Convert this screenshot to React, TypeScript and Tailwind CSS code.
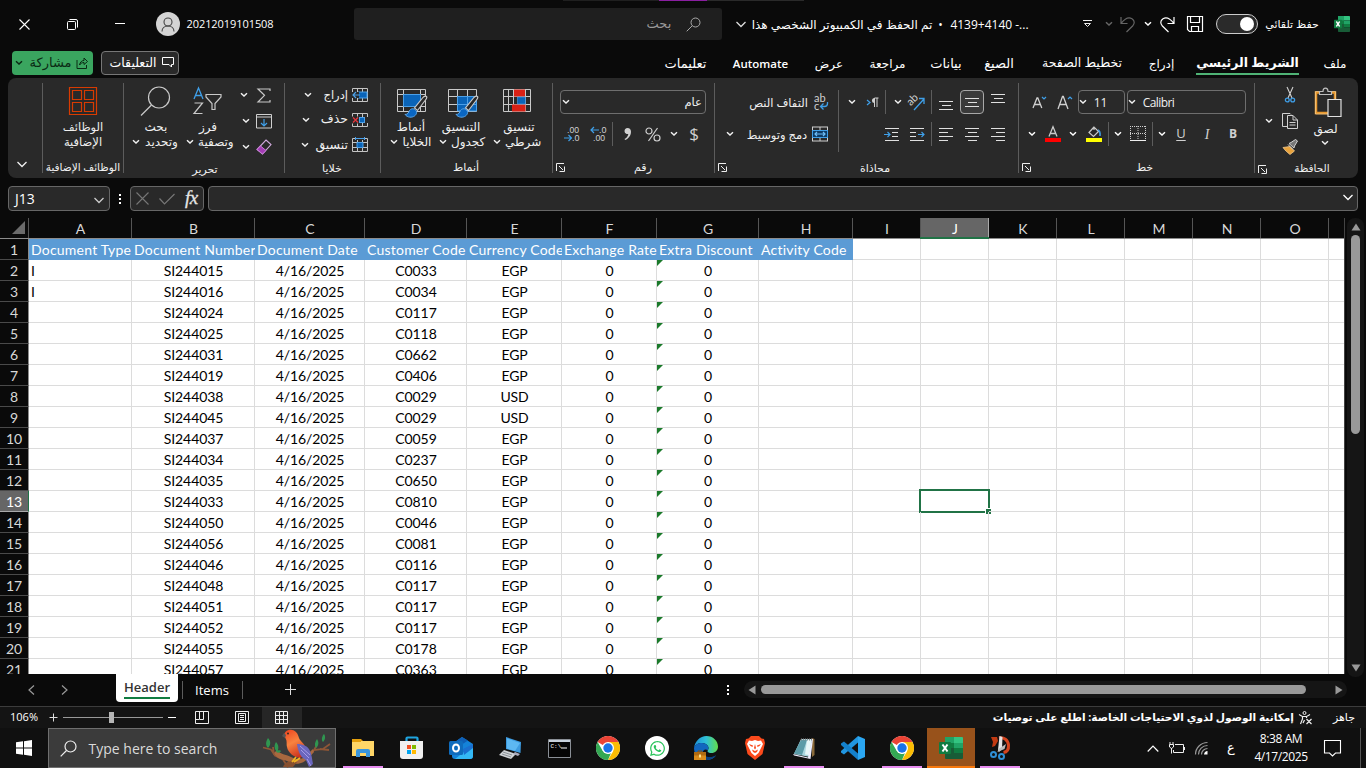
import React from 'react';
import { FaWhatsapp } from 'react-icons/fa';

type P = { className?: string };

const Svg = ({ w, h, className = '', children }: { w: number; h: number; className?: string; children: React.ReactNode }) => (
  <svg width={w} height={h} viewBox={`0 0 ${w} ${h}`} fill="none" className={`block shrink-0 overflow-visible ${className}`}>
    {children}
  </svg>
);

const Chev = ({ className = '' }: P) => (
  <Svg w={8} h={6} className={className}>
    <path d="M1 1.300 4 4l3-2.700" stroke="currentColor" strokeWidth="1.5" />
  </Svg>
);
const BigChev = ({ className = '' }: P) => (
  <Svg w={12} h={7} className={className}>
    <path d="M1.500 1l4.500 4.500L10.500 1" stroke="currentColor" strokeWidth="1.300" />
  </Svg>
);
const Launcher = ({ className = '' }: P) => (
  <Svg w={9} h={9} className={className}>
    <path d="M.5 8V.5H8M3 3l4 4M8.500 3.500v5h-5" stroke="#eee" />
  </Svg>
);
const Sep = ({ className = '' }: P) => <div className={`w-px shrink-0 bg-[#5c5c5c] ${className}`} />;

/* text centred in a box of fixed width, free to spill equally on both sides */
const Txt = ({ className = '', children }: { className?: string; children: React.ReactNode }) => (
  <div className={`flex shrink-0 items-center justify-center whitespace-nowrap ${className}`}>
    <span>{children}</span>
  </div>
);

const ExcelIcon = ({ className = '' }: P) => (
  <svg viewBox="0 0 24 22" preserveAspectRatio="none" className={`block shrink-0 ${className}`}>
    <path d="M6 0h9v11H6z" fill="#21a366" />
    <path d="M15 0h8a1 1 0 0 1 1 1v5h-9z" fill="#33c481" />
    <path d="M6 6h9v5H6z" fill="#107c41" />
    <path d="M15 6h9v5h-9z" fill="#21a366" />
    <path d="M6 11h9v6H6z" fill="#185c37" />
    <path d="M15 11h9v5h-9z" fill="#107c41" />
    <path d="M6 16h18v5a1 1 0 0 1-1 1H7a1 1 0 0 1-1-1z" fill="#185c37" />
    <rect y="5" width="12" height="12" rx="1" fill="#107c41" />
    <path d="M3.500 7.500l5 7M8.500 7.500l-5 7" stroke="#fff" strokeWidth="2" />
  </svg>
);

function TitleBar() {
  return (
    <div className="relative flex h-12 shrink-0 items-center">
      <div className="absolute left-[563px] top-0 h-px w-[97px] bg-[#1f1f1f]" />
      <div className="absolute left-[659px] top-0 h-px w-12 bg-[#8a1fa0]" />
      <div className="absolute left-[707px] top-0 h-px w-[97px] bg-[#2a2a2a]" />
      <Svg w={11} h={11} className="ml-[19px]">
        <path d="M.5.500l10 10M10.500.5l-10 10" stroke="#fff" strokeWidth="1.100" />
      </Svg>
      <Svg w={11} h={11} className="ml-[37px]">
        <rect x=".5" y="2.500" width="8" height="8" rx="1" stroke="#fff" />
        <path d="M2.500.5H9A1.500 1.500 0 0 1 10.500 2v6.500" stroke="#fff" />
      </Svg>
      <div className="-mt-px ml-[37px] h-px w-[10px] bg-white" />
      <div className="ml-[31px] flex size-6 items-center justify-center rounded-full bg-[#d4d4d4]">
        <Svg w={14} h={15}>
          <circle cx="7" cy="5" r="4" stroke="#444" strokeWidth="1.100" />
          <path d="M1 14.500c0-3.500 2.700-5.500 6-5.500s6 2 6 5.500" stroke="#444" strokeWidth="1.100" />
        </Svg>
      </div>
      <Txt className="ml-2 w-[84px] text-[11px] font-medium tracking-[-0.070px] text-white">20212019101508</Txt>
      <div className="ml-[82px] flex h-8 w-[368px] items-center rounded-[3px] bg-[#1f1f1f]">
        <Txt className="ml-[292px] w-[26px] text-[13px] text-[#9a9a9a]">بحث</Txt>
        <Svg w={15} h={15} className="ml-[14px]">
          <circle cx="9.500" cy="5.500" r="4.500" stroke="#aaa" />
          <path d="M6.300 8.700L.7 14.300" stroke="#aaa" />
        </Svg>
      </div>
      <BigChev className="ml-[13px] text-[#ddd]" />
      <div className="ml-[4px] mt-px flex w-[280px] items-center justify-between whitespace-nowrap text-[12px] text-white">
        <Txt className="w-[182px]">
          <span dir="rtl">تم الحفظ في الكمبيوتر الشخصي هذا</span>
        </Txt>
        <span>•</span>
        <Txt className="w-[83px]">4139+4140 -...</Txt>
      </div>
      <Svg w={9} h={8} className="ml-[52px]">
        <path d="M0 .5h9M1.500 3.500h6l-3 3z" stroke="#eee" />
      </Svg>
      <Chev className="ml-[13px] text-[#666]" />
      <Svg w={16} h={17} className="ml-[7px]">
        <path d="M1 1v6.500h6.500M1.300 7.200C4.500 3 8.500.7 12 2.700c3 2 2.700 5 .6 7.300L6.500 16" stroke="#666" strokeWidth="1.200" />
      </Svg>
      <Chev className="ml-2 text-white" />
      <Svg w={16} h={17} className="ml-[7px]">
        <path d="M15 1v6.500H8.500M14.700 7.200C11.500 3 7.500.7 4 2.700 1 4.700 1.300 7.700 3.400 10l6.100 6" stroke="#fff" strokeWidth="1.200" />
      </Svg>
      <Svg w={17} h={17} className="ml-[12px]">
        <path d="M.5.500h15v15h-13l-2-2zM3.500.5v6h9v-6M4.500 15.500v-5h7v5" stroke="#fff" strokeWidth="1.200" />
      </Svg>
      <div className="ml-[12px] flex h-5 w-[42px] items-center justify-end rounded-full border border-[#ccc] bg-[#2a2a2a] pr-[3px]">
        <div className="size-[14px] rounded-full bg-white" />
      </div>
      <Txt className="ml-[7px] w-[54px] text-[11px] text-white">حفظ تلقائي</Txt>
      <ExcelIcon className="ml-[15px] h-4 w-4" />
    </div>
  );
}

function Tabs() {
  return (
    <div className="flex h-[30px] shrink-0 items-center text-[12px] text-white">
      <div className="-mt-px ml-3 flex h-6 w-[81px] items-center rounded bg-[#3aa55f] text-[#0a2a14]">
        <Chev className="ml-[3px]" />
        <Txt className="ml-[6px] mt-px w-[43px] text-[13px]">مشاركة</Txt>
        <Svg w={12} h={12} className="ml-1">
          <path d="M1 3v8.500h9.500V8M3.500 8C4 5 6 3.500 8 3.500V1l3.500 3.500L8 7.500V5.500C6 5.500 4.500 6.500 3.500 8z" stroke="#0a2a14" />
        </Svg>
      </div>
      <div className="-mt-px ml-2 flex h-6 w-[78px] items-center rounded border border-[#777] bg-[#292929]">
        <Txt className="ml-[6px] mt-px w-[50px] text-[12.500px]">التعليقات</Txt>
        <Svg w={12} h={11} className="ml-1">
          <path d="M.5.500h11v7H9.500v2.500L7 7.500H.5z" stroke="#fff" />
        </Svg>
      </div>
      <Txt className="ml-[485px] mt-px w-[43px] text-[13px]">تعليمات</Txt>
      <Txt className="ml-[26px] mt-px w-[55px] text-[11.500px] font-semibold">Automate</Txt>
      <Txt className="ml-[27px] mt-px w-[28px]">عرض</Txt>
      <Txt className="ml-[26px] mt-px w-[37px]">مراجعة</Txt>
      <Txt className="ml-[24px] mt-px w-[32px] text-[13px]">بيانات</Txt>
      <Txt className="ml-[22px] mt-px w-[30px] text-[13px]">الصيغ</Txt>
      <Txt className="ml-[28px] mt-px w-[80px] text-[12.500px]">تخطيط الصفحة</Txt>
      <Txt className="ml-[27px] mt-px w-[25px]">إدراج</Txt>
      <div className="ml-[22px] flex h-[30px] w-[103px] flex-col items-center justify-end pb-[3px]">
        <Txt className="mb-[1px] h-[18px] w-full text-[12.500px] font-bold">الشريط الرئيسي</Txt>
        <div className="h-[2px] w-full bg-[#4fb375]" />
      </div>
      <Txt className="ml-[24px] mt-px w-[24px]">ملف</Txt>
    </div>
  );
}

const Label = ({ className = '', children, launch = true }: { className?: string; children: React.ReactNode; launch?: boolean }) => (
  <div className="mt-auto flex h-[21px] items-center text-[11px]">
    {launch ? <Launcher className="ml-[3px]" /> : null}
    <Txt className={className}>{children}</Txt>
  </div>
);

const Group = ({ className = '', children }: { className?: string; children: React.ReactNode }) => (
  <>
    <Sep className="my-[5px]" />
    <div className={`flex h-full shrink-0 flex-col ${className}`}>{children}</div>
  </>
);

const Two = ({ a, b, className, aw = 'w-full' }: { a: string; b: string; className: string; aw?: string }) => (
  <div className={`flex flex-col text-[12px] ${className}`}>
    <Txt className={`h-[15px] ${aw}`}>{a}</Txt>
    <div className="flex h-[15px] items-center justify-between">
      <Chev className="ml-px" />
      <Txt className="flex-1 pl-1">{b}</Txt>
    </div>
  </div>
);

const Brush = () => (
  <>
    <path d="M29.500 7.500c-1.300-1-3 .2-4 1.500l-8 10 3 2.500 8-10.500c.8-1 1.800-2.600 1-3.500z" fill="#292929" stroke="#c9c9c9" strokeWidth="1.200" />
    <path d="M8 25.500c3 0 3.500-2 4.500-4 1-1.800 4-2.500 6-.5s1 4.500-1 6c-2.500 1.800-7 1.800-9.500-1.500z" fill="#0a66c2" stroke="#5aa5e6" />
  </>
);

function CellsIcon({ kind }: { kind: 0 | 1 | 2 }) {
  return (
    <Svg w={16} h={16}>
      <path d="M.5 1.500h15v13H.5zM5.500 1.500v13M10.500 1.500v13M.5 5.500h15M.5 10.500h15" stroke="#c4c4c4" />
      {kind === 0 && (
        <>
          <path d="M6 5h9v6H6z" fill="#0a64b8" stroke="#4ba0e8" />
          <path d="M0 5h7v6H0z" fill="#292929" />
          <path d="M8 8H1M4 5L1 8l3 3" stroke="#4ba0e8" strokeWidth="1.200" />
        </>
      )}
      {kind === 1 && (
        <>
          <path d="M0 4.500h7v7H0z" fill="#292929" />
          <path d="M13 5h3v6h-3z" fill="#292929" />
          <path d="M7.500 5.500h5v5h-5z" fill="#0a64b8" stroke="#4ba0e8" />
          <path d="M1 5.500l5 5M6 5.500l-5 5" stroke="#e5373d" strokeWidth="1.300" />
        </>
      )}
      {kind === 2 && (
        <>
          <path d="M3 0h10v3H3z" fill="#292929" />
          <path d="M3.500 0v3M12.500 0v3M4 1.500h8" stroke="#4ba0e8" />
          <path d="M5 5.500h6v5H5z" fill="#0a64b8" stroke="#4ba0e8" />
        </>
      )}
    </Svg>
  );
}

const lineSets: Record<string, string> = {
  top: 'M0 .5h14M3 4.500h9M0 8.500h14',
  left: 'M0 .5h14M0 4.500h9M0 8.500h14M0 12.500h9',
  center: 'M0 .5h14M3 4.500h9M0 8.500h14M3 12.500h9',
  right: 'M0 .5h14M5 4.500h9M0 8.500h14M5 12.500h9',
};
const Lines = ({ kind, className = '' }: { kind: string; className?: string }) => (
  <Svg w={14} h={kind === 'top' ? 9 : 13} className={className}>
    <path d={lineSets[kind]} stroke="#e0e0e0" />
  </Svg>
);
const Indent = ({ kind, className = '' }: { kind: 'in' | 'out'; className?: string }) => (
  <Svg w={15} h={13} className={className}>
    <path d={kind === 'in' ? 'M1 .5h14M8 4.500h6M8 8.500h6M1 12.500h14' : 'M0 .5h14M0 4.500h6M0 8.500h6M0 12.500h14'} stroke="#e0e0e0" />
    <path d={kind === 'in' ? 'M0 6.500h6M3.500 4L6 6.500 3.500 9' : 'M8 6.500h6M11.500 4L14 6.500 11.500 9'} stroke="#3f9fe8" strokeWidth="1.200" />
  </Svg>
);

function Ribbon() {
  return (
    <div className="mx-2 flex h-[100px] shrink-0 overflow-hidden rounded-lg bg-[#292929] text-[#f0f0f0]">
      <div className="flex w-[34px] items-end pb-[10px] pl-[8px]">
        <BigChev />
      </div>

      <Group className="w-[80px] items-center">
        <Svg w={28} h={28} className="mt-[9px]">
          <path d="M.5.500h27v27H.5zM3.500 3.500h9v9h-9zM15.500 3.500h9v9h-9zM3.500 15.500h9v9h-9zM15.500 15.500h9v9h-9z" stroke="#d83b01" strokeWidth="1.200" />
        </Svg>
        <Txt className="mt-[4px] h-[15px] text-[11.500px]">الوظائف</Txt>
        <Txt className="h-[15px] text-[11.500px]">الإضافية</Txt>
        <Label launch={false} className="w-[73px] text-[10.500px]">الوظائف الإضافية</Label>
      </Group>

      <Group className="w-[160px]">
        <div className="flex">
          <div className="ml-[7px] flex w-[48px] flex-col">
            <Svg w={30} h={30} className="ml-[9px] mt-[8px]">
              <circle cx="19" cy="11.500" r="10.500" stroke="#c9c9c9" strokeWidth="1.200" />
              <path d="M11.500 19L1 29.500" stroke="#c9c9c9" strokeWidth="1.200" />
            </Svg>
            <Two a="بحث" b="وتحديد" className="mt-[3px] w-[48px]" aw="w-[50px]" />
          </div>
          <div className="ml-[6px] flex w-[46px] flex-col">
            <Svg w={30} h={30} className="ml-[8px] mt-[8px]">
              <path d="M1 13L5.500 2 10 13M2.500 9.500h6" stroke="#3f9fe8" strokeWidth="1.300" />
              <path d="M1.500 17h8L1 27.500h8.500" stroke="#c9c9c9" strokeWidth="1.200" />
              <path d="M13 8.500h15v2.500l-6 6.500v6h-3v-6l-6-6.500z" stroke="#c9c9c9" strokeWidth="1.200" />
            </Svg>
            <Two a="فرز" b="وتصفية" className="mt-[3px] w-[46px]" aw="w-[46px]" />
          </div>
          <div className="ml-[7px] flex flex-col">
            <div className="mt-[4px] flex h-[26px] items-center">
              <Chev className="ml-[2px]" />
              <Svg w={14} h={15} className="ml-[9px]">
                <path d="M13 3V1H1l6.500 6.300L1 14h12v-2" stroke="#c9c9c9" strokeWidth="1.200" />
              </Svg>
            </div>
            <div className="flex h-[26px] items-center">
              <Chev className="ml-[4px]" />
              <Svg w={16} h={15} className="ml-[6px]">
                <path d="M.5.500h15v13.500H.5zM.5 3h15" stroke="#d0d0d0" />
                <path d="M8 5v7M5 9l3 3 3-3" stroke="#3f9fe8" strokeWidth="1.200" />
              </Svg>
            </div>
            <div className="flex h-[26px] items-center">
              <Chev className="ml-[4px]" />
              <Svg w={16} h={16} className="ml-[6px]">
                <path d="M10 1l5 4.500L6.500 15 1 10.500z" stroke="#d0a8dc" strokeWidth="1.100" />
                <path d="M4.500 7L10 11.500 6.500 15 1 10.500z" fill="#a33bb5" stroke="#c77bd5" />
              </Svg>
            </div>
          </div>
        </div>
        <Label launch={false} className="ml-[65px] w-[32px]">تحرير</Label>
      </Group>

      <Group className="w-[95px]">
        {(['إدراج', 'حذف', 'تنسيق'] as const).map((t, i) => (
          <div key={t} className={`flex h-[26px] items-center ${i === 0 ? 'mt-[4px]' : ''}`}>
            <Chev className={i === 0 ? 'ml-[19px]' : i === 1 ? 'ml-[17px]' : 'ml-[16px]'} />
            <div className={`mr-1 flex flex-1 justify-end whitespace-nowrap ${i === 0 ? 'text-[11.500px]' : 'text-[12.500px]'}`}>{t}</div>
            <div className="mr-3">
              <CellsIcon kind={i as 0 | 1 | 2} />
            </div>
          </div>
        ))}
        <Label launch={false} className="ml-[37px] w-[20px]">خلايا</Label>
      </Group>

      <Group className="w-[171px]">
        <div className="flex">
          <div className="ml-[8px] w-[44px]">
            <Svg w={32} h={28} className="ml-[8px] mt-[11px]">
              <path d="M.5.500h28v22H.5zM6.500.5v22M.5 5.500h28M.5 17.500h28M23.500.5v22" stroke="#c9c9c9" />
              <path d="M6.500 5.500h17v12h-17z" fill="#0a64b8" stroke="#4ba0e8" />
              <Brush />
            </Svg>
            <Two a="أنماط" b="الخلايا" className="mt-[2px] w-[43px]" aw="w-[44px]" />
          </div>
          <div className="ml-[5px] w-[47px]">
            <Svg w={32} h={28} className="ml-[10px] mt-[11px]">
              <path d="M.5.500h28v22H.5zM9.500.5v22M19.500.5v22M.5 7.500h28M.5 15.500h28" stroke="#c9c9c9" />
              <path d="M9.500 7.500h19v14.500h-19zM19.500 7.500v15M9.500 15.500h19" fill="#0a64b8" stroke="#4ba0e8" />
              <Brush />
            </Svg>
            <Two a="التنسيق" b="كجدول" className="mt-[2px] w-[46px]" aw="w-[46px]" />
          </div>
          <div className="ml-[7px] w-[50px]">
            <Svg w={29} h={28} className="ml-[11px] mt-[11px]">
              <path d="M.5.500h27v22H.5zM5.500.5v22M10.500.5v22M22.500.5v22M.5 7.500h27M.5 15.500h27" stroke="#c9c9c9" />
              <path d="M11 .5h11v7H11zM9 15.500h13.500v7H9z" fill="#d92015" />
              <path d="M14.500 8h8v7h-8z" fill="#0a64b8" stroke="#4ba0e8" strokeWidth=".6" />
            </Svg>
            <Two a="تنسيق" b="شرطي" className="mt-[2px] w-[49px]" aw="w-[54px]" />
          </div>
        </div>
        <Label launch={false} className="ml-[73px] w-[24px]">أنماط</Label>
      </Group>

      <Group className="w-[161px]">
        <div className="ml-[7px] mt-[12px] flex h-6 w-[146px] items-center rounded border border-[#6e6e6e] pr-[3px] text-[11.500px]">
          <Chev className="ml-px" />
          <div className="flex-1 text-right">عام</div>
        </div>
        <div className="mt-[8px] flex h-6 items-center">
          <Svg w={17} h={16} className="ml-[11px]">
            <text x="3" y="7" fontSize="9" fontFamily="Liberation Sans" fill="#d0d0d0" textLength="12" lengthAdjust="spacingAndGlyphs">.00</text>
            <text x="8" y="15" fontSize="9" fontFamily="Liberation Sans" fill="#d0d0d0">.0</text>
            <path d="M0 12h7M4.500 9L7.500 12l-3 3" stroke="#3f9fe8" strokeWidth="1.200" />
          </Svg>
          <Svg w={17} h={16} className="ml-[9px]">
            <text x="9" y="7" fontSize="9" fontFamily="Liberation Sans" fill="#d0d0d0">.0</text>
            <text x="3" y="15" fontSize="9" fontFamily="Liberation Sans" fill="#d0d0d0" textLength="12" lengthAdjust="spacingAndGlyphs">.00</text>
            <path d="M1 4h8M4 1L1 4l3 3" stroke="#3f9fe8" strokeWidth="1.200" />
          </Svg>
          <Sep className="ml-[5px] h-6" />
          <Svg w={9} h={14} className="ml-[10px]">
            <path d="M4.500 1a3 3 0 1 0 .8 5.900C5 9 3.500 11 1.500 12l.7 1C5.500 11.500 8 8.500 8 4.700 8 2.500 6.700 1 4.500 1z" fill="#d0d0d0" />
          </Svg>
          <Svg w={16} h={15} className="ml-[13px]">
            <circle cx="4" cy="4" r="3" stroke="#d0d0d0" strokeWidth="1.200" />
            <circle cx="12" cy="11" r="3" stroke="#d0d0d0" strokeWidth="1.200" />
            <path d="M12.500 1l-9 13" stroke="#d0d0d0" strokeWidth="1.200" />
          </Svg>
          <Chev className="ml-[9px]" />
          <Txt className="ml-[11px] w-[10px] text-[17px] text-[#d0d0d0]">$</Txt>
        </div>
        <Label className="ml-[69px] w-[18px]">رقم</Label>
      </Group>

      <Group className="w-[303px]">
        <div className="flex h-[83px] pt-[12px]">
          <div className="w-[123px]">
            <div className="flex h-6 items-center">
              <Txt className="ml-[35px] mt-[2px] w-[57px] text-[11.500px]">التفاف النص</Txt>
              <Svg w={15} h={17} className="ml-[7px]">
                <text x="0" y="8" fontSize="11" fontFamily="Lato" fill="#d0d0d0">ab</text>
                <text x="0" y="16" fontSize="11" fontFamily="Lato" fill="#d0d0d0">c</text>
                <path d="M13.500 8v1.500q0 3-3 3H7M9.500 9.500l-3 3 3 3" stroke="#3f9fe8" strokeWidth="1.300" />
              </Svg>
            </div>
            <div className="mt-2 flex h-6 items-center">
              <Chev className="ml-[11px]" />
              <Txt className="ml-[12px] mt-[2px] w-[62px] text-[11.500px]">دمج وتوسيط</Txt>
              <Svg w={16} h={16} className="ml-[4px]">
                <path d="M.5 1v14M15.500 1v14M0 1h16M0 15h16M8 1v3M8 12v3" stroke="#d0d0d0" />
                <path d="M.5 4.500h15v7H.5z" fill="#0d3b66" stroke="#3f9fe8" />
                <path d="M3 8h10M5 6L3 8l2 2M11 6l2 2-2 2" stroke="#6dbcf5" strokeWidth="1.200" />
              </Svg>
            </div>
          </div>
          <Sep className="h-[62px]" />
          <div className="w-[179px]">
            <div className="flex h-6 items-center">
              <Chev className="ml-[9px]" />
              <Svg w={13} h={11} className="ml-[10px]">
                <path d="M1 3l3 2.500L1 8" stroke="#3f9fe8" strokeWidth="1.200" />
                <path d="M8.500 10V1M11 10V1M12.500 1H8.500" stroke="#d0d0d0" />
                <path d="M8.500 1a2.500 2.500 0 0 0 0 5z" fill="#d0d0d0" />
              </Svg>
              <Sep className="ml-[6px] h-6" />
              <Chev className="ml-[8px]" />
              <Svg w={17} h={17} className="ml-[6px]">
                <g transform="rotate(-45 7 8)">
                  <text x="1" y="8" fontSize="11" fontFamily="Lato" fill="#d0d0d0">ab</text>
                </g>
                <path d="M6 16L16 5M11 4.500h5V10" stroke="#3f9fe8" strokeWidth="1.300" />
              </Svg>
              <Sep className="ml-[6px] h-6" />
              <Lines kind="top" className="ml-[7px] mt-[7px]" />
              <div className="ml-[7px] flex size-6 shrink-0 items-center justify-center rounded border border-[#a8a8a8] bg-[#3a3a3a]">
                <Lines kind="top" />
              </div>
              <Lines kind="top" className="-mt-[7px] ml-[7px]" />
            </div>
            <div className="mt-2 flex h-6 items-center">
              <Indent kind="in" className="ml-[45px]" />
              <Indent kind="out" className="ml-[11px]" />
              <Sep className="ml-[6px] h-6" />
              <Lines kind="left" className="ml-[7px]" />
              <Lines kind="center" className="ml-[12px]" />
              <Lines kind="right" className="ml-[12px]" />
            </div>
          </div>
        </div>
        <Label className="ml-[134px] w-[28px]">محاذاة</Label>
      </Group>

      <Group className="w-[235px]">
        <div className="mt-[12px] flex h-6 items-center">
          <Svg w={15} h={14} className="ml-[13px]">
            <path d="M1 13L5 3h.8l4 10M2.500 9.500h6" stroke="#d0d0d0" strokeWidth="1.300" />
            <path d="M10 2l2 2 2-2" stroke="#3f9fe8" strokeWidth="1.200" />
          </Svg>
          <Svg w={16} h={15} className="ml-[10px]">
            <path d="M1 14L5.500 1.500h.8L11 14M2.700 9.500h6.600" stroke="#d0d0d0" strokeWidth="1.300" />
            <path d="M11 4l2-2 2 2" stroke="#3f9fe8" strokeWidth="1.200" />
          </Svg>
          <div className="ml-[5px] flex h-6 w-[47px] items-center rounded border border-[#6e6e6e] text-[12px]">
            <Chev />
            <Txt className="ml-[7px] mt-px w-[13px]">11</Txt>
          </div>
          <div className="ml-[2px] flex h-6 w-[119px] items-center rounded border border-[#6e6e6e] text-[12px]">
            <Chev />
            <Txt className="ml-[7px] mt-px w-[31px] tracking-[-0.600px]">Calibri</Txt>
          </div>
        </div>
        <div className="mt-[8px] flex h-6 items-center text-[#d0d0d0]">
          <Chev className="ml-[9px] text-white" />
          <Svg w={16} h={16} className="ml-[9px]">
            <path d="M4 10.500L8 .8l4 9.700M5.300 7.500h5.400" stroke="#c9c9c9" strokeWidth="1.300" />
            <path d="M0 12h16v4H0z" fill="#f00" />
          </Svg>
          <Chev className="ml-[8px] text-white" />
          <Svg w={16} h={16} className="ml-[9px]">
            <path d="M8 1L3 6.500 7.500 10.500 12.500 5.500zM8 1v3" stroke="#c9c9c9" strokeWidth="1.200" />
            <path d="M12 4q2.500 1 2 6" stroke="#3f9fe8" strokeWidth="1.600" />
            <path d="M0 12h16v4H0z" fill="#ff0" />
          </Svg>
          <Sep className="ml-[6px] h-6" />
          <Chev className="ml-[5px] text-white" />
          <Svg w={16} h={16} className="ml-[8px]">
            <path d="M.5 0v14M15.500 0v14M8 0v14M0 .5h16M0 7.500h16" stroke="#d0d0d0" strokeDasharray="1 1" />
            <path d="M0 14.500h16" stroke="#eee" />
          </Svg>
          <Sep className="ml-[6px] h-6" />
          <Chev className="ml-[5px] text-white" />
          <Txt className="ml-[9px] w-[12px] text-[13px] underline underline-offset-2">U</Txt>
          <Txt className="ml-[14px] w-[12px] font-['Liberation_Serif'] text-[14px] italic">I</Txt>
          <Txt className="ml-[14px] w-[12px] text-[12px] font-bold">B</Txt>
        </div>
        <Label className="ml-[105px] w-[17px]">خط</Label>
      </Group>

      <Group className="w-[103px]">
        <div className="flex">
          <div className="ml-[10px] w-[30px] pt-[4px]">
            <div className="flex h-[26px] items-center">
              <Svg w={10} h={16} className="ml-[20px]">
                <path d="M2 0l5 11M8 0L3 11" stroke="#d0d0d0" strokeWidth="1.100" />
                <circle cx="2.300" cy="13" r="1.900" stroke="#3f9fe8" strokeWidth="1.300" />
                <circle cx="7.700" cy="13" r="1.900" stroke="#3f9fe8" strokeWidth="1.300" />
              </Svg>
            </div>
            <div className="flex h-[26px] items-center">
              <Chev />
              <Svg w={16} h={16} className="ml-[9px]">
                <path d="M5.500 13.500h-5V.5H8l1 1" stroke="#d0d0d0" />
                <path d="M5.500 2.500H11L15.500 7v8.500h-10zM11 2.500V7h4.500M7.500 9.500h6M7.500 12h6" stroke="#d0d0d0" />
              </Svg>
            </div>
            <div className="flex h-[26px] items-center">
              <Svg w={16} h={16} className="ml-[17px]">
                <path d="M1 8.500l7-1 4.500 4.500L8 15.500C5 13 3 11.500 1 8.500z" fill="#e8a33d" stroke="#f3c98b" strokeWidth=".8" />
                <path d="M6 5.500l5 5M7 4.500l2-1 4.500-3L15.500 2 12.500 7l-.5 2z" fill="#777" stroke="#d0d0d0" />
              </Svg>
            </div>
          </div>
          <div className="ml-[19px] flex w-[30px] flex-col">
            <Svg w={28} h={31} className="mt-[9px]">
              <path d="M2 5.500h19V26H2z" stroke="#e8982e" strokeWidth="2.500" />
              <path d="M1.500 4.500h20V27h-20z" stroke="#f4cf94" strokeWidth=".7" />
              <path d="M5.500 7.500v-3h3.500C9 0 14 0 14 4.500h3.500v3z" fill="#292929" stroke="#bdbdbd" strokeWidth="1.200" />
              <path d="M14 12.500h13v17H14z" fill="#292929" stroke="#e0e0e0" strokeWidth="1.200" />
            </Svg>
            <Txt className="mt-[3px] h-[16px] w-[23px] text-[12px]">لصق</Txt>
            <Chev className="ml-[7px] mt-[3px]" />
          </div>
        </div>
        <Label className="ml-[27px] w-[36px] text-[10.500px]">الحافظة</Label>
      </Group>
    </div>
  );
}

function FormulaBar() {
  return (
    <div className="flex h-[40px] shrink-0 px-2 pt-2">
      <div className="flex h-[25px] w-[102px] items-center rounded border border-[#666] bg-[#292929] pl-[6px] text-[14px] text-white">
        <span className="flex-1">J13</span>
        <BigChev className="mr-[4px] mt-[3px] text-[#ccc]" />
      </div>
      <div className="ml-[9px] flex h-[25px] w-[3px] flex-col justify-center gap-[2px]">
        <i className="size-[2px] bg-white" />
        <i className="size-[2px] bg-white" />
        <i className="size-[2px] bg-white" />
      </div>
      <div className="ml-[8px] flex h-[25px] w-[74px] items-center rounded border border-[#666] bg-[#292929]">
        <Svg w={13} h={13} className="ml-[5px]">
          <path d="M.5.500l12 12M12.500.5l-12 12" stroke="#777" strokeWidth="1.100" />
        </Svg>
        <Svg w={16} h={12} className="ml-[10px]">
          <path d="M.5 5.500l5 5.500L15.500 1" stroke="#777" strokeWidth="1.200" />
        </Svg>
        <span className="-mt-[3px] ml-[10px] font-['Liberation_Serif'] text-[19px] italic leading-none tracking-[-0.500px] text-[#e6e6e6] [-webkit-text-stroke:0.3px]">fx</span>
      </div>
      <div className="ml-1 flex h-[25px] flex-1 items-center justify-end rounded border border-[#666] bg-[#292929] pr-[3px]">
        <BigChev className="-mt-[3px] text-white" />
      </div>
    </div>
  );
}

const cols = [
  { n: 'A', w: 'w-[103px]', h: 'Document Type' },
  { n: 'B', w: 'w-[123px]', h: 'Document Number' },
  { n: 'C', w: 'w-[110px]', h: 'Document Date' },
  { n: 'D', w: 'w-[102px]', h: 'Customer Code' },
  { n: 'E', w: 'w-[95px]', h: 'Currency Code' },
  { n: 'F', w: 'w-[95px]', h: 'Exchange Rate' },
  { n: 'G', w: 'w-[102px]', h: 'Extra Discount' },
  { n: 'H', w: 'w-[94px]', h: 'Activity Code' },
  { n: 'I', w: 'w-[68px]' },
  { n: 'J', w: 'w-[68px]' },
  { n: 'K', w: 'w-[68px]' },
  { n: 'L', w: 'w-[68px]' },
  { n: 'M', w: 'w-[68px]' },
  { n: 'N', w: 'w-[68px]' },
  { n: 'O', w: 'w-[68px]' },
  { n: '', w: 'w-[68px]' },
];

const data: [string, string, string][] = [
  ['SI244015', 'C0033', 'EGP'], ['SI244016', 'C0034', 'EGP'], ['SI244024', 'C0117', 'EGP'], ['SI244025', 'C0118', 'EGP'],
  ['SI244031', 'C0662', 'EGP'], ['SI244019', 'C0406', 'EGP'], ['SI244038', 'C0029', 'USD'], ['SI244045', 'C0029', 'USD'],
  ['SI244037', 'C0059', 'EGP'], ['SI244034', 'C0237', 'EGP'], ['SI244035', 'C0650', 'EGP'], ['SI244033', 'C0810', 'EGP'],
  ['SI244050', 'C0046', 'EGP'], ['SI244056', 'C0081', 'EGP'], ['SI244046', 'C0116', 'EGP'], ['SI244048', 'C0117', 'EGP'],
  ['SI244051', 'C0117', 'EGP'], ['SI244052', 'C0117', 'EGP'], ['SI244055', 'C0178', 'EGP'], ['SI244057', 'C0363', 'EGP'],
];

function Sheet() {
  return (
    <div className="flex h-[456px] shrink-0 font-['Lato','DejaVu_Sans',sans-serif] text-[14px]">
      <div className="w-[1345px] shrink-0 overflow-hidden border-r border-[#444]">
        <div className="flex h-[21px] w-[1420px] border-b border-[#8c8c8c] text-[#d8d8d8]">
          <div className="flex w-[29px] shrink-0 items-end justify-end border-r border-[#555] pb-[4px] pr-[3px]">
            <Svg w={13} h={13}>
              <path d="M13 0v13H0z" fill="#6b6b6b" />
            </Svg>
          </div>
          {cols.map((c) => (
            <div
              key={c.n}
              className={`relative flex h-[20px] shrink-0 items-center justify-center border-r pl-px pt-px ${c.w} ${c.n === 'J' ? 'border-[#aaa] bg-[#666] text-white' : 'border-[#555]'}`}
            >
              {c.n}
              {c.n === 'J' && <div className="absolute -bottom-px -left-px h-[2px] w-[69px] bg-[#217346]" />}
            </div>
          ))}
        </div>
        <div className="flex h-[21px] w-[1420px] bg-white">
          <RowNo n={1} />
          {cols.map((c, i) => (
            <div
              key={c.n}
              className={`flex h-[21px] shrink-0 items-center overflow-hidden whitespace-nowrap pl-[2px] tracking-[0.220px] text-white ${c.w} ${i < 8 ? 'bg-[#5b9bd5]' : 'border-b border-r border-[#dcdcdc]'}`}
            >
              {c.h}
            </div>
          ))}
        </div>
        {data.map(([inv, cust, cur], r) => {
          const vals = [r < 2 ? 'I' : '', inv, '4/16/2025', cust, cur, '0', '0'];
          return (
            <div key={inv} className="flex h-[21px] w-[1420px] bg-white text-black">
              <RowNo n={r + 2} />
              {cols.map((c, i) => (
                <div
                  key={c.n}
                  className={`relative flex h-[21px] shrink-0 items-center border-b border-r border-[#dcdcdc] tracking-[-0.100px] ${c.w} ${i === 0 ? 'pl-[2px]' : 'justify-center pl-px'}`}
                >
                  {vals[i]}
                  {i === 6 && (
                    <Svg w={6} h={6} className="absolute left-0 top-0">
                      <path d="M0 0h6L0 6z" fill="#1b7a2b" />
                    </Svg>
                  )}
                  {r === 11 && c.n === 'J' && (
                    <>
                      <div className="absolute -left-[2px] -top-[2px] h-[24px] w-[71px] border-2 border-[#217346]" />
                      <div className="absolute -bottom-[3px] -right-[3px] size-[6px] border-l border-t border-white bg-[#217346]" />
                    </>
                  )}
                </div>
              ))}
            </div>
          );
        })}
      </div>
      <div className="ml-[2px] flex h-[459px] w-[17px] shrink-0 flex-col items-center rounded-lg bg-[#151515]">
        <Svg w={10} h={8} className="mt-[5px]">
          <path d="M5 .5L9.500 7.500H.5z" fill="#999" />
        </Svg>
        <div className="mt-[4px] h-[199px] w-[9px] rounded-full bg-[#999]" />
        <Svg w={10} h={8} className="mb-[5px] mt-auto">
          <path d="M5 7.500L.5.500h9z" fill="#999" />
        </Svg>
      </div>
    </div>
  );
}

const RowNo = ({ n }: { n: number }) => (
  <div
    className={`flex h-[21px] w-[29px] shrink-0 items-center justify-center border-b border-r ${n === 13 ? 'border-b-[#aaa] border-r-[#217346] bg-[#666] text-white' : 'border-b-[#4a4a4a] border-r-[#8c8c8c] bg-[#0a0a0a] text-[#d8d8d8]'}`}
  >
    {n}
  </div>
);

function SheetTabs() {
  return (
    <div className="flex h-8 shrink-0 text-white">
      <Svg w={7} h={10} className="ml-[28px] mt-[11px]">
        <path d="M6 .5L1 5l5 4.500" stroke="#999" strokeWidth="1.200" />
      </Svg>
      <Svg w={7} h={10} className="ml-[26px] mt-[11px]">
        <path d="M1 .5L6 5 1 9.500" stroke="#999" strokeWidth="1.200" />
      </Svg>
      <div className="ml-[48px] flex h-[28px] w-[62px] flex-col items-center rounded-b bg-white">
        <Txt className="h-[23px] pt-[5px] text-[13px] font-semibold text-[#333]">Header</Txt>
        <div className="h-[2px] w-[46px] bg-[#107c41]" />
      </div>
      <Sep className="ml-[4px] mt-[7px] h-[18px]" />
      <Txt className="ml-3 mt-px h-[32px] w-[34px] text-[13px] font-medium">Items</Txt>
      <Sep className="ml-[13px] mt-[7px] h-[18px]" />
      <Svg w={11} h={11} className="ml-[42px] mt-[10px]">
        <path d="M5.500 0v11M0 5.500h11" stroke="#ddd" />
      </Svg>
      <div className="ml-[431px] mt-[11px] flex flex-col gap-[2px]">
        <i className="size-[2px] bg-white" />
        <i className="size-[2px] bg-white" />
        <i className="size-[2px] bg-white" />
      </div>
      <div className="ml-[15px] mt-[7px] flex h-[17px] w-[603px] items-center rounded-full bg-[#151515]">
        <Svg w={8} h={10} className="ml-1">
          <path d="M7.500.5v9L.5 5z" fill="#999" />
        </Svg>
        <div className="ml-[5px] h-[9px] w-[545px] rounded-full bg-[#999]" />
        <Svg w={8} h={10} className="ml-auto mr-[4px]">
          <path d="M.5.500v9L7.500 5z" fill="#999" />
        </Svg>
      </div>
    </div>
  );
}

function StatusBar() {
  return (
    <div className="flex h-[22px] shrink-0 items-center border-t border-[#3c3c3c] bg-[#141414] text-[11px] text-white">
      <Txt className="ml-[10px] w-[28px]">106%</Txt>
      <Svg w={9} h={9} className="ml-[11px]">
        <path d="M4.500.5v8M.5 4.500h8" stroke="#ddd" />
      </Svg>
      <div className="ml-[5px] h-px w-[46px] bg-[#999]" />
      <div className="h-[11px] w-[5px] bg-[#b5b5b5]" />
      <div className="h-px w-[49px] bg-[#999]" />
      <div className="ml-[5px] h-px w-[8px] bg-white" />
      <Svg w={14} h={13} className="ml-[19px]">
        <path d="M.5.500h13v12H.5zM4.500.5v8h4v-8M0 8.500h4" stroke="#eee" />
      </Svg>
      <Svg w={14} h={13} className="ml-[26px]">
        <path d="M.5.500h13v12H.5zM3.500 2.500h7v8h-7zM5 4.500h4M5 6.500h4M5 8.500h4" stroke="#eee" />
      </Svg>
      <div className="ml-[13px] flex h-[21px] w-[40px] items-center justify-center bg-[#262626]">
        <Svg w={13} h={13} className="-ml-px">
          <path d="M.5.500h12v12H.5zM4.500.5v12M8.500.5v12M.5 4.500h12M.5 8.500h12" stroke="#eee" />
        </Svg>
      </div>
      <div dir="rtl" className="ml-[690px] w-[302px] whitespace-nowrap text-right text-[10.600px] font-bold">
        إمكانية الوصول لذوي الاحتياجات الخاصة: اطلع على توصيات
      </div>
      <Svg w={15} h={14} className="ml-[4px]">
        <circle cx="6.500" cy="2" r="1.500" stroke="#eee" />
        <path d="M1 3.500l3.500 2V8L2.500 13M12 3.500l-3.500 2V7M4.500 5.500h4M6.500 9L5 12M8.500 8l5 5M13.500 8l-5 5" stroke="#eee" strokeWidth="1.200" />
      </Svg>
      <Txt className="ml-[19px] w-[24px]">جاهز</Txt>
    </div>
  );
}

const Chrome = () => (
  <svg width="24" height="24" viewBox="0 0 24 24">
    <circle cx="12" cy="12" r="12" fill="#fff" />
    <path d="M12 12L1.600 6A12 12 0 0 1 22.400 6H12z" fill="#ea4335" />
    <path d="M12 6h10.400A12 12 0 0 1 12 24l5.200-9z" fill="#fbbc04" />
    <path d="M1.600 6l5.200 9L12 18l3-1-3 7A12 12 0 0 1 1.600 6z" fill="#34a853" />
    <circle cx="12" cy="12" r="6" fill="#fff" />
    <circle cx="12" cy="12" r="4.700" fill="#1a73e8" />
  </svg>
);

const Bird = () => (
  <Svg w={70} h={38}>
    <defs>
      <linearGradient id="bd" x1="24" y1="2" x2="38" y2="28" gradientUnits="userSpaceOnUse">
        <stop stopColor="#ef4a22" />
        <stop offset=".45" stopColor="#f8833f" />
        <stop offset="1" stopColor="#c92f1d" />
      </linearGradient>
    </defs>
    <path d="M1 18.500l8 2M9 20.500l4 6 8 4 5 8M12 26l-1-8M48 26l4-5 9-1 7-5M58 20l9 1M52 21l3-5" stroke="#8f5636" strokeWidth="1.800" />
    <path d="M12 24c3 7 10 6 15 9 6 3 12 2 16-1 4-3 6-6 9-9l-1-3c-4 3-6 7-10 9-5 2-8 1-12-1-6-3-10-2-14-7z" fill="#a8683f" />
    <path d="M21 38c2-5 6-7 14-5l-4 5z" fill="#87502f" />
    <path d="M6 9c3 3 3 7 0 10-3-3-2-7 0-10zM14 13c3 3 3 7 1 10-3-3-3-7-1-10zM14 23c2-2 4-2 5-1-1 2-3 2-5 1zM55 10c2 3 2 6-1 9-2-3-1-6 1-9zM62 5c2 3 1 6-1 8-2-2-1-6 1-8z" fill="#2f9650" />
    <path d="M22 7c0-4 4-7 8-6 4 .5 6 4 7 8 1 3 6 6 7 11 1 4-2 7-6 9-6-1-12-5-13-11-1-4 1-6-3-11z" fill="url(#bd)" />
    <path d="M35 15c6 0 11 2 13 7 2 4 2 9 3 13l-4 3-3-7c-5-2-8-8-9-16z" fill="#6a66bd" />
    <path d="M38 17l10 9M39 21l8 8M45 30l4 7" stroke="#a59be8" />
    <path d="M22 4l-2 3 3 2 1-3z" fill="#555" />
    <circle cx="26" cy="4.500" r=".9" fill="#222" />
    <path d="M34 28l-4 5M38 29l-6 4" stroke="#f0b422" strokeWidth="1.800" />
  </Svg>
);

const taskIcons: { key: string; bar: string; el: React.ReactNode }[] = [
  {
    key: 'files', bar: 'bg-[#e88df0]', el: (
      <Svg w={22} h={20}>
        <path d="M0 1h9l2 2H0z" fill="#d9920c" /><path d="M0 3h22v15H0z" fill="#ffd667" /><path d="M0 1h9v3H0z" fill="#e5a00d" />
        <path d="M4 19v-6a2 2 0 0 1 2-2h10a2 2 0 0 1 2 2v6h-4v-4H8v4z" fill="#3a96dd" />
      </Svg>
    ),
  },
  {
    key: 'store', bar: '', el: (
      <Svg w={24} h={24}>
        <path d="M6.500 6V2.500a1 1 0 0 1 1-1h9a1 1 0 0 1 1 1V6" stroke="#1fa5e0" strokeWidth="2.200" />
        <path d="M0 5h23v15a3 3 0 0 1-3 3H3a3 3 0 0 1-3-3z" fill="#f0f0f0" />
        <path d="M7 9h4v4H7z" fill="#f25022" /><path d="M12 9h4v4h-4z" fill="#7fba00" /><path d="M7 14h4v4H7z" fill="#00a4ef" /><path d="M12 14h4v4h-4z" fill="#ffb900" />
      </Svg>
    ),
  },
  {
    key: 'outlook', bar: '', el: (
      <Svg w={24} h={22}>
        <path d="M3 7l10-7 11 7v12a3 3 0 0 1-3 3H6a3 3 0 0 1-3-3z" fill="#1482d8" /><path d="M13 0l6 3.500L6 12V5z" fill="#0f5fb5" />
        <path d="M24 8v11a3 3 0 0 1-3 3H6z" fill="#33b8f5" /><path d="M14 12l10-5v4L15 18z" fill="#1a6fcf" />
        <rect y="4" width="14" height="14" rx="1.500" fill="#0f6cbd" /><ellipse cx="7" cy="11" rx="3" ry="3.500" stroke="#fff" strokeWidth="2" />
      </Svg>
    ),
  },
  {
    key: 'pc', bar: '', el: (
      <Svg w={23} h={22}>
        <path d="M7 0l15 5-.5 11L7 12z" fill="#3d9be0" /><path d="M8 1.500l13 4.500-5 8-8-2.500z" fill="#5db8f2" />
        <path d="M5 13l12 4-5 5-12-4z" fill="#cfd3d6" /><path d="M4 15l9 3M3 17l9 3" stroke="#8b9196" /><path d="M16 15l5 2-2 2-5-2z" fill="#aab" />
      </Svg>
    ),
  },
  {
    key: 'cmd', bar: '', el: (
      <Svg w={23} h={19}>
        <path d="M.5.500h22v18H.5z" fill="#050505" stroke="#8a8f96" /><path d="M1 1h21v2H1z" fill="#c9d3dd" />
        <text x="2.500" y="9" fontSize="6" fontFamily="Liberation Mono" fill="#fff">C:\</text><path d="M13 9h6" stroke="#fff" />
      </Svg>
    ),
  },
  { key: 'chrome', bar: '', el: <Chrome /> },
  {
    key: 'whatsapp', bar: '', el: (
      <div className="flex size-6 items-center justify-center rounded-full bg-white text-[#2bc35c]"><FaWhatsapp size={17} /></div>
    ),
  },
  {
    key: 'edge', bar: '', el: (
      <Svg w={24} h={24}>
        <defs>
          <linearGradient id="eg" x1="0" y1="8" x2="24" y2="8" gradientUnits="userSpaceOnUse">
            <stop stopColor="#1c8fd8" /><stop offset=".5" stopColor="#2fc0d8" /><stop offset="1" stopColor="#63dc4a" />
          </linearGradient>
        </defs>
        <path d="M0 12C1 5 6 0 12.500 0 19 0 24 5 24 10.500c0 4-3 6.500-6.500 6.500-4 0-4.500-1.800-3.500-3 1.800-3-1-7-6-7-4 0-7 2-8 5z" fill="url(#eg)" />
        <path d="M0 12C1 8.500 4 7 8 7c5 0 7.500 4 6 7-3-1.500-5.500 0-5 3 .8 5 7 6.500 13 2.500C20 22.500 16 24 12 24 5 24 0 19 0 12z" fill="#1267bf" />
        <path d="M9 15c-.5 6 8 8 13 4-2 3.500-6 5-10 5-3 0-5-4-3-9z" fill="#0b3f7c" />
        <rect y="16" width="12" height="8" fill="#d98b1b" /><path d="M0 16h12v3.500H0z" fill="#b06a10" /><rect x="5" y="18.500" width="2" height="3" fill="#ffe08a" /><path d="M4 16v-1h4v1" stroke="#8f5207" />
      </Svg>
    ),
  },
  {
    key: 'brave', bar: '', el: (
      <Svg w={20} h={24}>
        <path d="M6 0h8l2.500 2.500L19 3l1 4-2.500 11L10 24l-7.500-6L0 7l1-4 2.500-.5z" fill="#fb4a1c" />
        <path d="M4 4.500l3 .5 3-1 3 1 3-.5 2 3.500-3 6-1.500 3L10 20l-3.500-3L5 14 2 8z" fill="#fff" />
        <path d="M4 8l4 1.500-.5 1.500L5.500 10zM16 8l-4 1.500.5 1.500 2-1zM10 8l-1 4 1 1.500 1-1.500zM7 13.500l3 1.500 3-1.500-1 2.500-2 1-2-1z" fill="#fb4a1c" />
      </Svg>
    ),
  },
  {
    key: 'notepad', bar: 'bg-[#e88df0]', el: (
      <Svg w={23} h={22}>
        <path d="M19 1l2.500 1V18L19 20z" fill="#8a6a3a" />
        <path d="M8 2l11 0-2 18-16-3z" fill="#a9d6df" /><path d="M8 3l6 0-5 15-8-1.500z" fill="#5b9ba8" /><path d="M14 3l5-1-3 16-4-.5z" fill="#e6f6f8" />
        <path d="M0 17l15 3.500L19 2l1 0-2.500 20L1 18.500z" fill="#eef" /><path d="M8 2.500h11" stroke="#888" strokeDasharray="1 1" strokeWidth="2" />
      </Svg>
    ),
  },
  {
    key: 'code', bar: '', el: (
      <Svg w={24} h={24}>
        <path d="M17 0v6.500L3 18.500 0 16.500V15z" fill="#2196e0" /><path d="M17 24v-6.500L3 5.500 0 7.500V9z" fill="#1481cc" /><path d="M17 0l7 3v18l-7 3z" fill="#2ba7f2" />
      </Svg>
    ),
  },
  { key: 'chrome2', bar: 'bg-[#e88df0]', el: <Chrome /> },
  { key: 'excel', bar: 'bg-[#f7780c]', el: <ExcelIcon className="h-[22px] w-6" /> },
  {
    key: 'snip', bar: 'bg-[#e88df0]', el: (
      <Svg w={20} h={24}>
        <path d="M9 2c5-1 9 2 9.500 7 .3 4-1.500 7-5 7.500" stroke="#d4441f" strokeWidth="3" />
        <path d="M1 1h6l1 4-3 5-3 1 1-5z" fill="#c23a12" />
        <path d="M9.500 0l3 1-.5 12-3 3-1-2z" fill="#e4e4e4" />
        <path d="M16 8l-1.500 5-7 3 1-3z" fill="#bdbdbd" />
        <circle cx="3.500" cy="18.500" r="2.500" stroke="#2f8fd6" strokeWidth="2" /><circle cx="11.500" cy="20.500" r="2.500" stroke="#2f8fd6" strokeWidth="2" />
      </Svg>
    ),
  },
];

function TaskBar() {
  return (
    <div className="flex h-10 shrink-0 items-center bg-[#101010] text-white">
      <Svg w={16} h={16} className="ml-4">
        <path d="M0 2.300L7 1.300v6.200H0zM8 1.200L16 0v7.500H8zM0 8.500h7v6.200l-7-1zM8 8.500h8V16l-8-1.200z" fill="#fff" />
      </Svg>
      <div className="ml-4 flex h-10 w-[288px] items-center border border-[#6f6f6f] bg-[#3b3b3b]">
        <Svg w={17} h={17} className="ml-[11px]">
          <circle cx="10.500" cy="6.500" r="5.500" stroke="#eee" strokeWidth="1.200" />
          <path d="M6.500 10.500L.7 16.300" stroke="#eee" strokeWidth="1.200" />
        </Svg>
        <Txt className="ml-[12px] w-[128px] text-[14px] text-[#dadada]">Type here to search</Txt>
        <div className="ml-[45px]">
          <Bird />
        </div>
      </div>
      <div className="ml-[3px] flex h-10">
        {taskIcons.map((t) => (
          <div key={t.key} className={`relative mr-px flex h-10 w-12 items-center justify-center ${t.key === 'excel' ? 'bg-[#98521b]' : ''}`}>
            {t.el}
            {t.bar && <div className={`absolute bottom-0 h-[2px] ${t.key === 'excel' ? 'w-12' : 'w-10'} ${t.bar}`} />}
          </div>
        ))}
      </div>
      <Svg w={12} h={7} className="ml-[122px]">
        <path d="M.7 6.500L6 1l5.300 5.500" stroke="#fff" strokeWidth="1.200" />
      </Svg>
      <Svg w={16} h={12} className="ml-[10px]">
        <path d="M6 2.500h8.500v8H4.500V8M15.500 5v3M1 0v2.500M4 0v2.500M.5 2.500h4V5L2.500 6.500.5 5zM2.500 6v5.500" stroke="#eee" />
      </Svg>
      <Svg w={13} h={13} className="ml-[10px]">
        <path d="M.5 12.500A12 12 0 0 1 12.500.5M3.500 12.500a9 9 0 0 1 9-9M6.500 12.500a6 6 0 0 1 6-6" stroke="#999" strokeWidth="1.200" />
        <path d="M9 12.500a4 4 0 0 1 3.500-3.500v3.500z" fill="#fff" />
      </Svg>
      <Txt className="ml-[17px] w-[12px] text-[13px]">ع</Txt>
      <div className="ml-[18px] flex w-[52px] flex-col items-center whitespace-nowrap text-[12px] leading-[18px] tracking-[-0.400px]">
        <span>8:38 AM</span>
        <span>4/17/2025</span>
      </div>
      <Svg w={17} h={17} className="ml-[17px]">
        <path d="M.5.500h16v12.500h-5L8.500 16 5.500 13h-5z" stroke="#fff" strokeWidth="1.100" />
      </Svg>
      <div className="ml-[19px] h-10 w-px bg-[#555]" />
    </div>
  );
}

export default function App() {
  return (
    <div className="flex h-[768px] w-[1366px] flex-col overflow-hidden bg-[#0a0a0a] font-['Open_Sans','DejaVu_Sans',sans-serif]">
      <TitleBar />
      <Tabs />
      <Ribbon />
      <FormulaBar />
      <Sheet />
      <SheetTabs />
      <StatusBar />
      <TaskBar />
    </div>
  );
}
